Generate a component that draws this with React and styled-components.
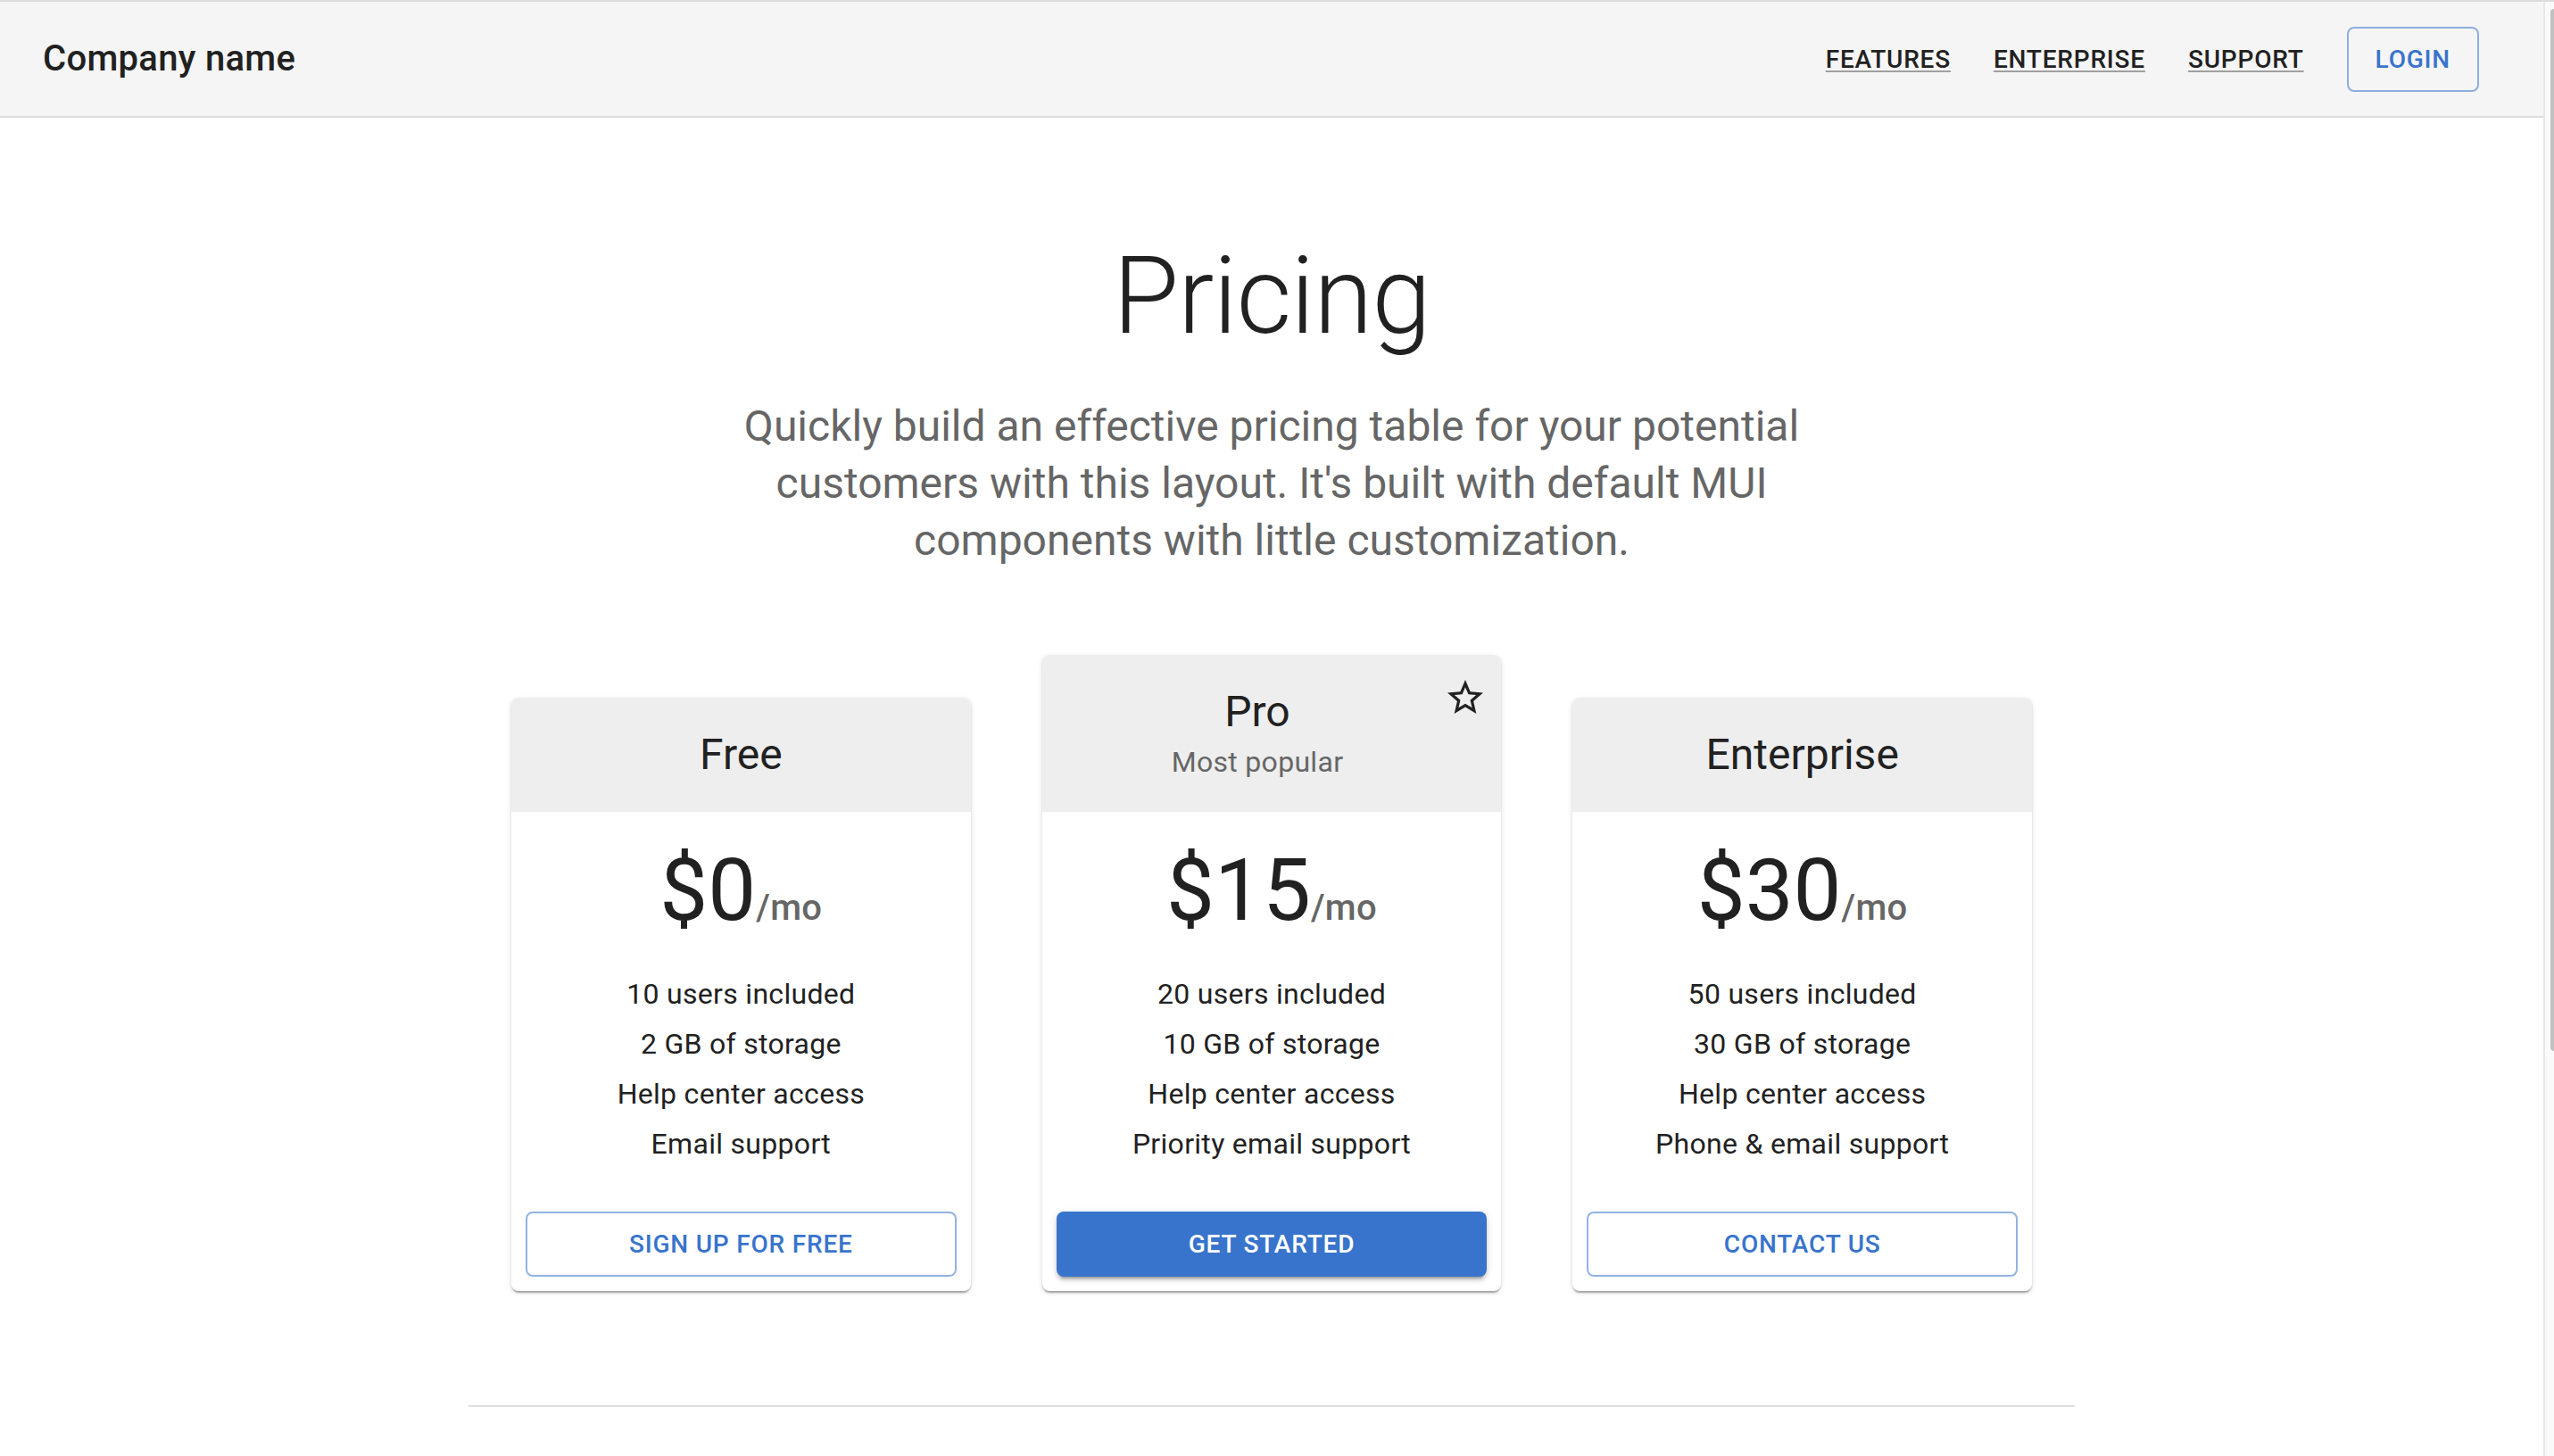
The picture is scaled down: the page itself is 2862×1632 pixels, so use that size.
import React from 'react';
import styled, { createGlobalStyle } from 'styled-components';

const BLUE = '#3874cb';
const TEXT = '#212121';
const MUTED = '#666666';

const GlobalStyle = createGlobalStyle`
  html, body {
    margin: 0;
    padding: 0;
    background: #ffffff;
  }

  body {
    font-family: Roboto, "Liberation Sans", Arial, sans-serif;
    color: ${TEXT};
    -webkit-font-smoothing: antialiased;
  }

  * {
    box-sizing: border-box;
  }
`;

const Page = styled.div`
  display: flex;
  height: 1632px;
  overflow: hidden;
  border-top: 2px solid #dcdcdc;
`;

const Main = styled.div`
  flex: 1;
  min-width: 0;
`;

const ScrollTrack = styled.div`
  width: 12px;
  flex: 0 0 12px;
  background: #fafafa;
  border-left: 2px solid #e8e8e8;
  padding: 8px 0 0 6px;
`;

const ScrollThumb = styled.div`
  height: 1168px;
  background: #c1c1c1;
  border-radius: 6px 0 0 6px;
`;

const Header = styled.header`
  background: #f5f5f5;
  border-bottom: 2px solid #dcdcdc;
`;

const Toolbar = styled.nav`
  display: flex;
  align-items: center;
  min-height: 128px;
  padding: 0 48px;
`;

const Brand = styled.h6`
  flex: 1;
  margin: 0;
  font-size: 40px;
  font-weight: 500;
  line-height: 1.6;
  letter-spacing: 0.0075em;
  color: ${TEXT};
`;

const NavLink = styled.a`
  margin: 16px 24px;
  font-size: 28px;
  font-weight: 500;
  line-height: 1.75;
  letter-spacing: 0.8px;
  text-transform: uppercase;
  color: ${TEXT};
  text-decoration: underline;
  text-decoration-color: rgba(33, 33, 33, 0.4);
  text-decoration-thickness: 2px;
  text-underline-offset: 3px;
`;

const Button = styled.a`
  display: flex;
  align-items: center;
  justify-content: center;
  width: ${({ $full }) => ($full ? '100%' : 'auto')};
  margin: ${({ $full }) => ($full ? '0' : '16px 24px')};
  padding: ${({ $contained }) => ($contained ? '12px 32px' : '10px 30px')};
  border-radius: 8px;
  border: ${({ $contained }) => ($contained ? 'none' : '2px solid rgba(56, 116, 203, 0.55)')};
  background: ${({ $contained }) => ($contained ? BLUE : 'transparent')};
  color: ${({ $contained }) => ($contained ? '#ffffff' : BLUE)};
  box-shadow: ${({ $contained }) =>
    $contained
      ? '0 6px 2px -4px rgba(0,0,0,0.2), 0 4px 4px 0 rgba(0,0,0,0.14), 0 2px 10px 0 rgba(0,0,0,0.12)'
      : 'none'};
  font-size: 28px;
  font-weight: 500;
  line-height: 1.75;
  letter-spacing: 0.8px;
  text-transform: uppercase;
  text-decoration: none;
`;

const Hero = styled.section`
  max-width: 1200px;
  margin: 0 auto;
  padding: 128px 0 96px;
  text-align: center;
`;

const Title = styled.h1`
  margin: 0 0 42px;
  font-size: 120px;
  font-weight: 300;
  line-height: 1.2;
  letter-spacing: -0.00833em;
  color: ${TEXT};
`;

const Lead = styled.p`
  margin: 0;
  font-size: 48px;
  font-weight: 400;
  line-height: 1.334;
  color: ${MUTED};
`;

const Plans = styled.main`
  max-width: 1800px;
  margin: 0 auto;
  padding: 0 48px;
  display: grid;
  grid-template-columns: repeat(3, 1fr);
  gap: 80px;
  align-items: end;
`;

const Card = styled.article`
  background: #ffffff;
  border-radius: 8px;
  overflow: hidden;
  box-shadow: 0 4px 2px -2px rgba(0,0,0,0.2), 0 2px 2px 0 rgba(0,0,0,0.14), 0 2px 6px 0 rgba(0,0,0,0.12);
`;

const CardHead = styled.div`
  display: flex;
  align-items: center;
  padding: 32px;
  background: #eeeeee;
`;

const HeadText = styled.div`
  flex: 1;
  text-align: center;
`;

const PlanName = styled.div`
  font-size: 48px;
  font-weight: 400;
  line-height: 1.334;
  color: ${TEXT};
`;

const PlanNote = styled.div`
  font-size: 32px;
  line-height: 1.5;
  letter-spacing: 0.00938em;
  color: ${MUTED};
`;

const HeadAction = styled.div`
  align-self: flex-start;
  flex: 0 0 auto;
  margin: -8px -16px -8px 0;
  display: flex;
`;

const CardBody = styled.div`
  padding: 32px;
`;

const PriceRow = styled.div`
  display: flex;
  justify-content: center;
  align-items: baseline;
  margin-bottom: 32px;
`;

const Amount = styled.span`
  font-size: 96px;
  font-weight: 400;
  line-height: 1.167;
  color: ${TEXT};
`;

const Per = styled.span`
  font-size: 40px;
  font-weight: 500;
  line-height: 1.6;
  letter-spacing: 0.0075em;
  color: ${MUTED};
`;

const Features = styled.ul`
  margin: 0;
  padding: 0;
  list-style: none;
`;

const Feature = styled.li`
  font-size: 32px;
  line-height: 1.75;
  letter-spacing: 0.00938em;
  text-align: center;
  color: ${TEXT};
`;

const CardActions = styled.div`
  display: flex;
  padding: 16px;
`;

const Footer = styled.footer`
  max-width: 1800px;
  margin: 128px auto 0;
  padding: 96px 48px;
  border-top: 2px solid #e0e0e0;
`;

const StarBorder = () => (
  <svg width="48" height="48" viewBox="0 0 24 24" fill={TEXT} aria-hidden="true">
    <path d="M22 9.24l-7.19-.62L12 2 9.19 8.63 2 9.24l5.46 4.73L5.82 21 12 17.27 18.18 21l-1.63-7.03L22 9.24zM12 15.4l-3.76 2.27 1-4.28-3.32-2.88 4.38-.38L12 6.1l1.71 4.04 4.38.38-3.32 2.88 1 4.28L12 15.4z" />
  </svg>
);

const tiers = [
  {
    title: 'Free',
    price: '0',
    features: ['10 users included', '2 GB of storage', 'Help center access', 'Email support'],
    button: 'Sign up for free',
    contained: false,
  },
  {
    title: 'Pro',
    subheader: 'Most popular',
    price: '15',
    features: ['20 users included', '10 GB of storage', 'Help center access', 'Priority email support'],
    button: 'Get started',
    contained: true,
  },
  {
    title: 'Enterprise',
    price: '30',
    features: ['50 users included', '30 GB of storage', 'Help center access', 'Phone & email support'],
    button: 'Contact us',
    contained: false,
  },
];

const renderTier = (tier) => (
  <Card key={tier.title}>
    <CardHead>
      <HeadText>
        <PlanName>{tier.title}</PlanName>
        {tier.subheader && <PlanNote>{tier.subheader}</PlanNote>}
      </HeadText>
      {tier.title === 'Pro' && (
        <HeadAction>
          <StarBorder />
        </HeadAction>
      )}
    </CardHead>
    <CardBody>
      <PriceRow>
        <Amount>${tier.price}</Amount>
        <Per>/mo</Per>
      </PriceRow>
      <Features>
        {tier.features.map((line) => (
          <Feature key={line}>{line}</Feature>
        ))}
      </Features>
    </CardBody>
    <CardActions>
      <Button href="#" $full $contained={tier.contained}>
        {tier.button}
      </Button>
    </CardActions>
  </Card>
);

const App = () => (
  <>
    <GlobalStyle />
    <Page>
      <Main>
        <Header>
          <Toolbar>
            <Brand>Company name</Brand>
            <NavLink href="#">Features</NavLink>
            <NavLink href="#">Enterprise</NavLink>
            <NavLink href="#">Support</NavLink>
            <Button href="#">Login</Button>
          </Toolbar>
        </Header>
        <Hero>
          <Title>Pricing</Title>
          <Lead>
            Quickly build an effective pricing table for your potential customers with this layout.
            It&apos;s built with default MUI components with little customization.
          </Lead>
        </Hero>
        <Plans>{tiers.map(renderTier)}</Plans>
        <Footer />
      </Main>
      <ScrollTrack>
        <ScrollThumb />
      </ScrollTrack>
    </Page>
  </>
);

export default App;
